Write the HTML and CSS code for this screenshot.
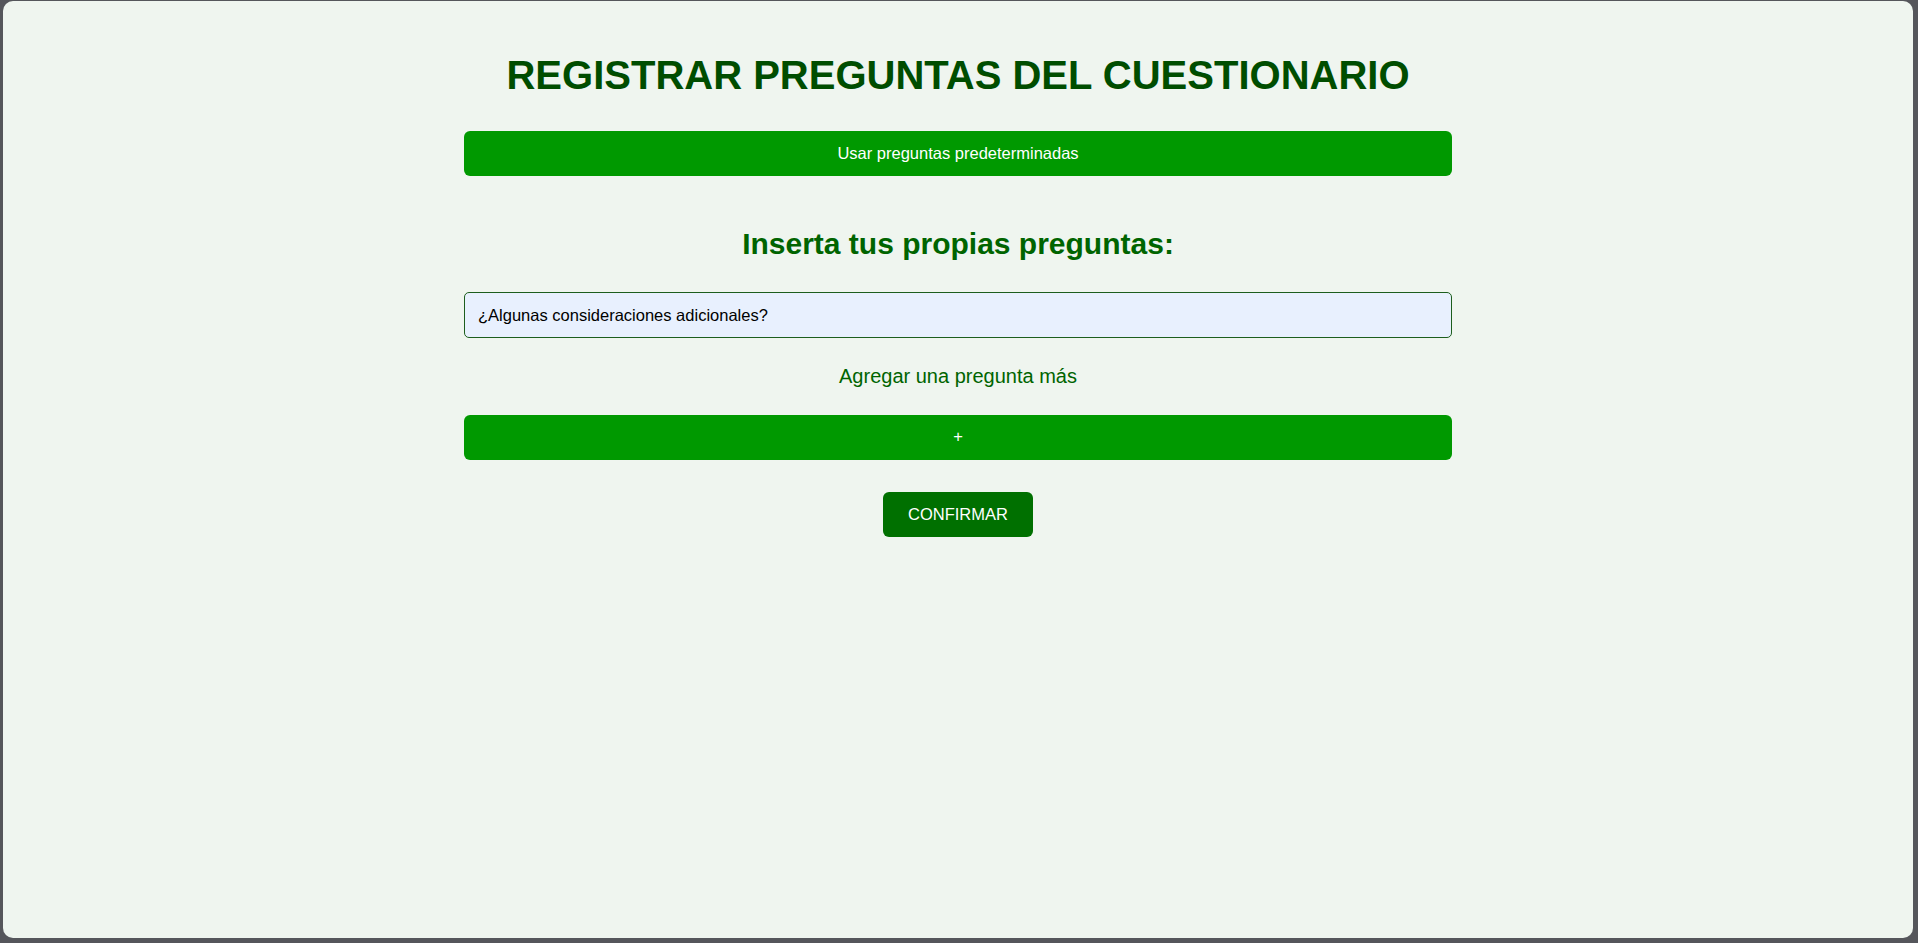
FILE: index.html
```html
<!DOCTYPE html>
<html lang="es">
<head>
<meta charset="utf-8">
<title>Registrar preguntas del cuestionario</title>
<link rel="stylesheet" href="styles.css">
</head>
<body>
<main class="card">
  <div class="content">
    <h1 class="title">REGISTRAR PREGUNTAS DEL CUESTIONARIO</h1>
    <button class="btn-wide btn-default" type="button">Usar preguntas predeterminadas</button>
    <h2 class="subtitle">Inserta tus propias preguntas:</h2>
    <input class="question" type="text" value="¿Algunas consideraciones adicionales?">
    <p class="add-label">Agregar una pregunta más</p>
    <button class="btn-wide btn-add" type="button">+</button>
    <button class="btn-confirm" type="button">CONFIRMAR</button>
  </div>
</main>
</body>
</html>
```

FILE: styles.css
```css
html, body {
  margin: 0;
  padding: 0;
  height: 100%;
}
body {
  background: #55565b;
  font-family: "Liberation Sans", Arial, sans-serif;
  padding: 1px 5px 5px 3px;
  box-sizing: border-box;
}
.card {
  background: #eff5ef;
  border-radius: 10px;
  height: 100%;
  box-sizing: border-box;
  padding-top: 52px;
  display: flex;
  justify-content: center;
}
.content {
  width: 988px;
  display: flex;
  flex-direction: column;
  align-items: center;
}
.title {
  margin: 0;
  font-size: 40px;
  line-height: 44px;
  font-weight: bold;
  color: #004d00;
}
.btn-wide {
  width: 100%;
  height: 45px;
  border: none;
  border-radius: 6px;
  background: #009900;
  color: #ffffff;
  font-family: "Liberation Sans", Arial, sans-serif;
  font-size: 16.5px;
  padding: 0;
  cursor: pointer;
}
.btn-default {
  margin-top: 34px;
}
.subtitle {
  margin: 52px 0 0;
  font-size: 30px;
  line-height: 32px;
  font-weight: bold;
  color: #006400;
}
.question {
  margin-top: 32px;
  width: 100%;
  height: 46px;
  box-sizing: border-box;
  border: 1px solid #1d5e1d;
  border-radius: 5px;
  background: #e8f0fe;
  color: #000000;
  padding: 0 13px;
  font-family: "Liberation Sans", Arial, sans-serif;
  font-size: 16.5px;
  outline: none;
}
.add-label {
  margin: 26px 0 0;
  font-size: 20px;
  line-height: 24px;
  color: #006400;
}
.btn-add {
  margin-top: 27px;
  padding-bottom: 3px;
}
.btn-confirm {
  margin-top: 32px;
  width: 150px;
  height: 45px;
  border: none;
  border-radius: 6px;
  background: #007000;
  color: #ffffff;
  font-family: "Liberation Sans", Arial, sans-serif;
  font-size: 16.5px;
  padding: 0;
  cursor: pointer;
}
```
